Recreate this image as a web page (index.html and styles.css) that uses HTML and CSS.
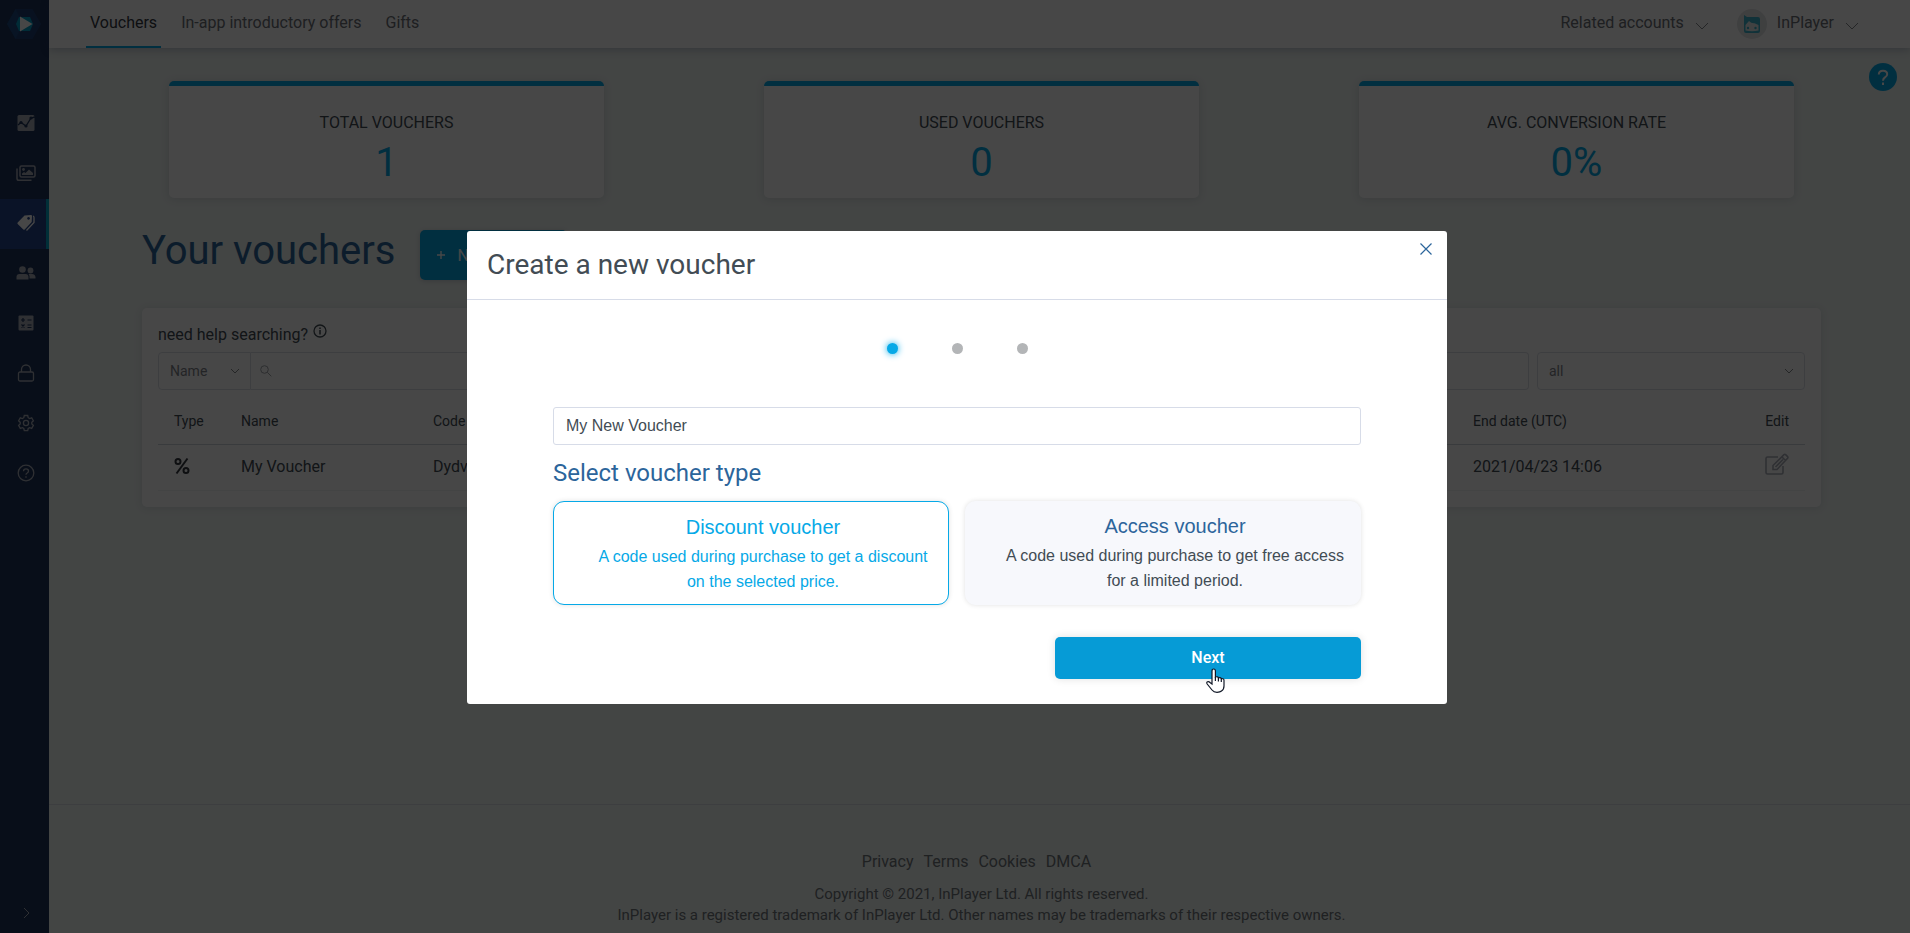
FILE: index.html
```html
<!DOCTYPE html>
<html lang="en">
<head>
    <meta charset="UTF-8">
    <meta name="viewport" content="width=device-width, initial-scale=1.0">
    <title>Vouchers - InPlayer</title>
    <link rel="stylesheet" href="styles.css">
</head>
<body>
    <div class="app">
        <aside class="sidebar">
            <a href="#" class="logo" aria-label="InPlayer">
                <svg width="34" height="30" viewBox="0 0 34 30">
                    <path d="M8.500 0h17L34 15l-8.500 15h-17L0 15z" fill="#1f3f74"/>
                    <path d="M8.500 0L0 15l8.500 15L16 15z" fill="#1d4a80"/>
                    <path d="M12 8h11l3 7-3 7H12l-3-7z" fill="#069dc6"/>
                    <path d="M13 7.500L25.500 15 13 22.500z" fill="#fff"/>
                </svg>
            </a>
            <nav class="side-nav">
                <a href="#" class="side-link" aria-label="Analytics">
                    <svg width="18" height="18" viewBox="0 0 18 18">
                        <rect x="0.500" y="1" width="17" height="16" rx="1.500" fill="currentColor"/>
                        <path d="M1 11l3-2.500 5 3.500 5-8 4-1" fill="none" stroke="#1d3259" stroke-width="1.300"/>
                        <circle cx="4" cy="8.500" r="1.600" fill="#1d3259"/>
                        <circle cx="9" cy="12" r="1.600" fill="#1d3259"/>
                        <circle cx="14" cy="4" r="1.600" fill="#1d3259"/>
                    </svg>
                </a>
                <a href="#" class="side-link" aria-label="Assets">
                    <svg width="20" height="18" viewBox="0 0 20 18">
                        <rect x="4" y="2" width="15" height="11" rx="1.500" fill="none" stroke="currentColor" stroke-width="1.500"/>
                        <path d="M1 4.500V14.500q0 1.800 1.800 1.800H15.500" fill="none" stroke="currentColor" stroke-width="1.500"/>
                        <circle cx="7.500" cy="5.500" r="1.400" fill="currentColor"/>
                        <path d="M6 11V9.500l2-1.500 1.500 1 3.500-3.500 4 3.500v2z" fill="currentColor"/>
                    </svg>
                </a>
                <a href="#" class="side-link active" aria-label="Vouchers">
                    <svg width="18" height="18" viewBox="0 0 18 18">
                        <path fill-rule="evenodd" d="M7.500 1.500L14 1q1 0 1 1l-.3 6-7 7.500q-.7.700-1.400 0L.7 10q-.7-.7 0-1.400zM11.500 3a1.400 1.400 0 1 0 .1 0z" fill="currentColor"/>
                        <path d="M16 2q1 .3 1 1.500V8.500L9.500 16.500" fill="none" stroke="currentColor" stroke-width="1.300"/>
                    </svg>
                </a>
                <a href="#" class="side-link" aria-label="Audience">
                    <svg width="20" height="18" viewBox="0 0 20 18">
                        <circle cx="6.500" cy="5.500" r="3.300" fill="currentColor"/>
                        <path d="M.5 15.500v-2.500q0-3 3-3h6q3 0 3 3v2.500z" fill="currentColor"/>
                        <circle cx="14.500" cy="6.500" r="2.900" fill="currentColor"/>
                        <path d="M13.500 14.500v-2q0-1.500-1-2.500H16q3 0 3.500 3v1.500z" fill="currentColor"/>
                    </svg>
                </a>
                <a href="#" class="side-link" aria-label="Accounting">
                    <svg width="18" height="18" viewBox="0 0 18 18">
                        <rect x="1.500" y="1.500" width="15" height="15" rx="1" fill="currentColor"/>
                        <path d="M4 6h4M6 4v4M10.500 6h4M4.500 10.500l3 3M7.500 10.500l-3 3M10.500 11h4M10.500 13.500h4" stroke="#1d3259" stroke-width="1.200"/>
                    </svg>
                </a>
                <a href="#" class="side-link" aria-label="Security">
                    <svg width="18" height="18" viewBox="0 0 18 18" fill="none" stroke="currentColor" stroke-width="1.300">
                        <rect x="1.500" y="8" width="15" height="9" rx="1.500"/>
                        <path d="M4.500 8V5.500a4.500 4.500 0 0 1 9 0V8"/>
                    </svg>
                </a>
                <a href="#" class="side-link" aria-label="Settings">
                    <svg width="18" height="18" viewBox="0 0 18 18" fill="none" stroke="currentColor" stroke-width="1.300">
                        <path d="M7.300 1.500h3.400l.5 2.200 1.400.8 2.100-.7 1.700 3-1.600 1.500v1.600l1.600 1.500-1.700 3-2.100-.7-1.400.8-.5 2.200H7.300l-.5-2.200-1.400-.8-2.100.7-1.700-3 1.600-1.500V8.300L1.600 6.800l1.700-3 2.100.7 1.400-.8z"/>
                        <circle cx="9" cy="9" r="2.600"/>
                    </svg>
                </a>
                <a href="#" class="side-link" aria-label="Help">
                    <svg width="18" height="18" viewBox="0 0 18 18" fill="none" stroke="currentColor" stroke-width="1.300">
                        <circle cx="9" cy="9" r="7.800"/>
                        <path d="M6.500 7.200q0-2.400 2.500-2.400t2.500 2.200q0 1.200-1.300 2-1.200.7-1.200 1.800M9 12.300v1.400"/>
                    </svg>
                </a>
            </nav>
            <button type="button" class="side-toggle" aria-label="Expand menu">
                <svg width="8" height="12" viewBox="0 0 8 12"><path d="M1 1l5 5-5 5" fill="none" stroke="currentColor"/></svg>
            </button>
        </aside>

        <div class="page">
            <header class="topbar">
                <nav class="tabs">
                    <a href="#" class="tab active">Vouchers</a>
                    <a href="#" class="tab">In-app introductory offers</a>
                    <a href="#" class="tab">Gifts</a>
                </nav>
                <div class="account">
                    <button type="button" class="account-menu">
                        Related accounts
                        <svg class="caret" width="14" height="8" viewBox="0 0 14 8"><path d="M1 1l6 6 6-6" fill="none" stroke="currentColor"/></svg>
                    </button>
                    <button type="button" class="account-menu">
                        <span class="avatar">
                            <svg width="18" height="20" viewBox="0 0 18 20">
                                <path d="M1 1l3 2h11q2 0 2 2v12q0 2-2 2H3q-2 0-2-2z" fill="#3fb4cc"/>
                                <path d="M2.500 16.500V11l3.500-4q2 2.500 5.500 2.300L15.500 11v5.500q-6.500 1.500-13 0z" fill="#e8eeee"/>
                                <circle cx="5" cy="14" r="1.200" fill="#3fb4cc"/>
                                <circle cx="12.500" cy="14" r="1.200" fill="#3fb4cc"/>
                            </svg>
                        </span>
                        InPlayer
                        <svg class="caret" width="14" height="8" viewBox="0 0 14 8"><path d="M1 1l6 6 6-6" fill="none" stroke="currentColor"/></svg>
                    </button>
                </div>
            </header>

            <button type="button" class="help-btn" aria-label="Help">
                <svg width="28" height="28" viewBox="0 0 28 28">
                    <path d="M9.800 11.500q0-3.800 4.200-3.800t4.200 3.500q0 1.800-2.200 3.200-2 1.300-2 3.400M14 19.500v2.500" fill="none" stroke="#fff" stroke-width="2"/>
                </svg>
            </button>

            <main class="content">
                <section class="stats">
                    <div class="stat">
                        <h2>TOTAL VOUCHERS</h2>
                        <p>1</p>
                    </div>
                    <div class="stat">
                        <h2>USED VOUCHERS</h2>
                        <p>0</p>
                    </div>
                    <div class="stat">
                        <h2>AVG. CONVERSION RATE</h2>
                        <p>0%</p>
                    </div>
                </section>

                <section class="vouchers">
                    <div class="title-row">
                        <h1>Your vouchers</h1>
                        <button type="button" class="btn-new">
                            <svg width="8" height="8" viewBox="0 0 8 8"><path d="M4 0v8M0 4h8" stroke="currentColor" stroke-width="1.400"/></svg>
                            New voucher
                        </button>
                    </div>

                    <div class="panel">
                        <div class="search-help">
                            need help searching?
                            <svg width="14" height="14" viewBox="0 0 14 14" fill="none" stroke="currentColor">
                                <circle cx="7" cy="7" r="6" stroke-width="1.300"/>
                                <path d="M7 6v4.500M7 3.500v1.500" stroke-width="1.500"/>
                            </svg>
                        </div>
                        <div class="filters">
                            <div class="search-group">
                                <select class="select select-name" aria-label="Search by">
                                    <option>Name</option>
                                </select>
                                <div class="search-box">
                                    <svg width="12" height="12" viewBox="0 0 12 12" fill="none" stroke="currentColor"><circle cx="4.500" cy="4.500" r="3.800"/><path d="M7.300 7.300l4 4"/></svg>
                                    <input type="text" aria-label="Search vouchers">
                                </div>
                            </div>
                            <select class="select select-all" aria-label="Voucher type">
                                <option>all</option>
                            </select>
                        </div>

                        <table class="voucher-table">
                            <thead>
                                <tr>
                                    <th class="col-type">Type</th>
                                    <th class="col-name">Name</th>
                                    <th class="col-code">Code</th>
                                    <th class="col-date">End date (UTC)</th>
                                    <th class="col-edit">Edit</th>
                                </tr>
                            </thead>
                            <tbody>
                                <tr>
                                    <td>
                                        <svg class="percent" width="16" height="18" viewBox="0 0 16 18" fill="none" stroke="currentColor" stroke-width="2">
                                            <circle cx="4" cy="4.500" r="2.500"/>
                                            <circle cx="12" cy="13.500" r="2.500"/>
                                            <path d="M13.500 1.500l-11 15"/>
                                        </svg>
                                    </td>
                                    <td>My Voucher</td>
                                    <td>Dydv</td>
                                    <td>2021/04/23 14:06</td>
                                    <td class="col-edit">
                                        <button type="button" class="edit-btn" aria-label="Edit voucher">
                                            <svg width="24" height="22" viewBox="0 0 24 22" fill="none" stroke="currentColor" stroke-width="1.600">
                                                <path d="M13 4H2.500Q1 4 1 5.500v14Q1 21 2.500 21h14q1.500 0 1.500-1.500V13"/>
                                                <path d="M8 16.500v-4L19 1.600q.8-.7 1.600 0l2 2q.7.800 0 1.600L12 16.500zM17 4l3.500 3.500M10.500 14l7.500-7.500"/>
                                            </svg>
                                        </button>
                                    </td>
                                </tr>
                            </tbody>
                        </table>
                    </div>
                </section>
            </main>

            <footer class="footer">
                <nav class="footer-links">
                    <a href="#">Privacy</a>
                    <a href="#">Terms</a>
                    <a href="#">Cookies</a>
                    <a href="#">DMCA</a>
                </nav>
                <p>Copyright © 2021, InPlayer Ltd. All rights reserved.</p>
                <p>InPlayer is a registered trademark of InPlayer Ltd. Other names may be trademarks of their respective owners.</p>
            </footer>
        </div>
    </div>

    <div class="overlay">
        <form class="modal" role="dialog" aria-labelledby="modalTitle">
            <div class="modal-header">
                <h2 id="modalTitle">Create a new voucher</h2>
                <button type="button" class="close-btn" aria-label="Close">
                    <svg width="12" height="12" viewBox="0 0 12 12"><path d="M0.500 0.500l11 11M11.500 0.500l-11 11" stroke="currentColor" stroke-width="1.200"/></svg>
                </button>
            </div>
            <div class="modal-body">
                <div class="steps">
                    <span class="step active"></span>
                    <span class="step"></span>
                    <span class="step"></span>
                </div>

                <input type="text" class="name-input" aria-label="Voucher name" value="My New Voucher">

                <h3>Select voucher type</h3>
                <div class="types">
                    <label class="type selected">
                        <input type="radio" name="type" value="discount" checked>
                        <span class="type-title">Discount voucher</span>
                        <span class="type-text">A code used during purchase to get a discount on the selected price.</span>
                    </label>
                    <label class="type">
                        <input type="radio" name="type" value="access">
                        <span class="type-title">Access voucher</span>
                        <span class="type-text">A code used during purchase to get free access for a limited period.</span>
                    </label>
                </div>

                <div class="modal-actions">
                    <button type="button" class="btn-next">
                        Next
                        <svg class="pointer" width="20" height="26" viewBox="0 0 20 26">
                            <path d="M6 16V3q0-2 1.700-2T9.400 3v6q2.600-.8 3 .8 2.400-.6 2.900.8 2.700-.4 2.700 1.900V18q0 3.500-2.500 5-1.300 1.300-4.500 1.300T6 22L1.200 16q-1-1.700.3-2.300T4 14.500z" fill="#fff" stroke="#111827" stroke-width="1.200"/>
                            <path d="M9.400 9v4M12.400 10v3.500M15.300 10.500V14" stroke="#111827" stroke-width="1.200"/>
                        </svg>
                    </button>
                </div>
            </div>
        </form>
    </div>
</body>
</html>
```
FILE: styles.css
```css
* {
    margin: 0;
    padding: 0;
    box-sizing: border-box;
}

body {
    font-family: Roboto, sans-serif;
    font-size: 16px;
    color: #424c54;
    background: #f0f6f3;
}

a {
    color: inherit;
    text-decoration: none;
}

button {
    font-family: inherit;
    font-size: 16px;
    color: inherit;
    background: none;
    border: none;
    cursor: pointer;
}

svg {
    display: block;
    flex-shrink: 0;
}

h1, h2, h3, th {
    font-weight: 400;
}

.app {
    display: flex;
    min-height: 100vh;
}

/* sidebar */
.sidebar {
    display: flex;
    flex-direction: column;
    width: 49px;
    flex-shrink: 0;
    background: #1d3259;
    color: #a9adb8;
}

.logo {
    padding: 9px 7px 60px;
}

.side-link {
    display: flex;
    align-items: center;
    justify-content: center;
    height: 50px;
    padding: 0 0 3px 2px;
}

.side-link.active {
    background: #24448b;
    border-right: 3px solid #06a9c8;
    color: #fff;
    padding-left: 5px;
}

.side-toggle {
    display: flex;
    justify-content: center;
    margin-top: auto;
    padding: 14px 0 14px 5px;
}

/* top bar */
.page {
    display: flex;
    flex-direction: column;
    flex: 1;
    position: relative;
}

.topbar {
    display: flex;
    justify-content: space-between;
    height: 48px;
    padding: 0 51px 0 37px;
    background: #fff;
    box-shadow: 0 2px 8px rgba(30, 40, 90, 0.25);
}

.tabs {
    display: flex;
    gap: 16px;
}

.tab {
    padding: 0 4px;
    line-height: 45px;
    color: #6c7077;
}

.tab.active {
    color: #33383f;
    border-bottom: 2px solid #06a9e7;
}

.account {
    display: flex;
    gap: 28px;
    color: #6c7077;
}

.account-menu {
    display: flex;
    align-items: center;
    padding-bottom: 3px;
}

.caret {
    margin: 6px 0 0 11px;
    color: #85888e;
}

.avatar {
    display: flex;
    align-items: center;
    justify-content: center;
    width: 30px;
    height: 30px;
    margin: 3px 10px 0 0;
    border-radius: 50%;
    background: #e2e4e6;
}

.help-btn {
    position: absolute;
    top: 63px;
    right: 13px;
    width: 28px;
    height: 28px;
    border-radius: 50%;
    background: #06a9e7;
}

/* stats */
.content {
    padding: 33px 36px 0 40px;
}

.stats {
    display: flex;
    justify-content: space-around;
}

.stat {
    width: 435px;
    height: 117px;
    padding-top: 25px;
    border-top: 5px solid #06a9e7;
    border-radius: 5px;
    background: #fff;
    box-shadow: 0 1px 8px rgba(40, 40, 90, 0.15);
    text-align: center;
}

.stat h2 {
    font-size: 16px;
    line-height: 24px;
}

.stat p {
    font-size: 40px;
    line-height: 56px;
    color: #06a9e7;
}

/* vouchers */
.vouchers {
    padding: 32px 53px 0;
}

.title-row {
    display: flex;
    gap: 25px;
    margin-bottom: 28px;
}

.title-row h1 {
    font-size: 40px;
    line-height: 42px;
    color: #2c659b;
}

.btn-new {
    display: flex;
    align-items: center;
    gap: 12px;
    height: 50px;
    padding: 0 17px;
    border-radius: 5px;
    background: #06a9e7;
    box-shadow: 0 1px 5px rgba(40, 40, 90, 0.2);
    color: #fff;
}

.panel {
    padding: 16px;
    border-radius: 5px;
    background: #fff;
    box-shadow: 0 1px 8px rgba(40, 40, 90, 0.12);
}

.search-help {
    display: flex;
    gap: 5px;
    height: 28px;
    line-height: 22px;
}

.filters {
    display: flex;
    gap: 8px;
}

.search-group {
    display: flex;
    flex: 1;
}

.select {
    height: 38px;
    padding: 0 11px;
    border: 1px solid #dcdfe6;
    border-radius: 4px;
    font-family: inherit;
    font-size: 14px;
    color: #7f838a;
    appearance: none;
    background: #fff url("data:image/svg+xml,%3Csvg xmlns='http://www.w3.org/2000/svg' width='10' height='6'%3E%3Cpath d='M1 1l4 4 4-4' fill='none' stroke='%2385888e'/%3E%3C/svg%3E") no-repeat right 10px center;
}

.select-name {
    width: 93px;
    border-radius: 4px 0 0 4px;
}

.select-all {
    width: 268px;
}

.search-box {
    display: flex;
    align-items: center;
    gap: 8px;
    flex: 1;
    padding: 0 9px;
    border: 1px solid #dcdfe6;
    border-left: none;
    border-radius: 0 4px 4px 0;
    color: #a0a4aa;
}

.search-box input {
    flex: 1;
    border: none;
    outline: none;
    font-size: 14px;
}

.voucher-table {
    width: 100%;
    border-collapse: collapse;
    table-layout: fixed;
    text-align: left;
}

.voucher-table th {
    height: 54px;
    padding: 8px 16px 0;
    font-size: 14px;
    border-bottom: 1px solid #cdd2da;
}

.voucher-table td {
    height: 46px;
    padding: 0 16px 2px;
    border-bottom: 1px solid #f1f2f5;
}

.col-type {
    width: 67px;
}

.col-name {
    width: 192px;
}

.col-date {
    width: 248px;
}

.col-edit {
    width: 100px;
    text-align: right;
}

.percent {
    color: #33383f;
}

.edit-btn {
    color: #a9adb8;
}

/* footer */
.footer {
    margin-top: auto;
    padding: 46px 0 7px 4px;
    border-top: 1px solid #dcdfe6;
    color: #70767c;
    font-size: 15px;
    line-height: 21px;
    text-align: center;
}

.footer-links {
    display: flex;
    justify-content: center;
    gap: 10px;
    margin-bottom: 12px;
    padding-right: 10px;
    font-size: 16px;
}

/* modal */
.overlay {
    position: fixed;
    inset: 0;
    display: flex;
    align-items: center;
    justify-content: center;
    padding: 2px 0 0 4px;
    background: rgba(0, 0, 0, 0.72);
}

.modal {
    width: 980px;
    max-width: 100%;
    border-radius: 3px;
    background: #fff;
}

.modal-header {
    display: flex;
    justify-content: space-between;
    align-items: flex-start;
    height: 69px;
    padding: 12px 15px 0 20px;
    border-bottom: 1px solid #d7dce8;
}

.modal-header h2 {
    font-size: 28px;
    line-height: 44px;
}

.close-btn {
    color: #2c659b;
}

.modal-body {
    padding: 43px 86px 25px;
}

.steps {
    display: flex;
    justify-content: center;
    gap: 54px;
    margin-bottom: 53px;
}

.step {
    width: 11px;
    height: 11px;
    border-radius: 50%;
    background: #b3b5b7;
}

.step.active {
    background: #06a9e7;
    box-shadow: 0 0 7px #06a9e7;
}

.name-input {
    display: block;
    width: 100%;
    height: 38px;
    padding: 0 12px;
    border: 1px solid #d7dce8;
    border-radius: 3px;
    font-family: "Liberation Sans", Arial, sans-serif;
    font-size: 16px;
    color: #424c54;
    outline: none;
}

.modal-body h3 {
    margin: 12px 0;
    font-size: 24px;
    line-height: 32px;
    color: #2c659b;
}

.types {
    display: grid;
    grid-template-columns: 1fr 1fr;
    gap: 16px;
    font-family: "Liberation Sans", Arial, sans-serif;
}

.type {
    position: relative;
    padding: 10px 16px 10px 40px;
    border-radius: 11px;
    background: #f7f8fc;
    box-shadow: 0 0 5px rgba(0, 0, 0, 0.12);
    text-align: center;
    cursor: pointer;
}

.type input {
    position: absolute;
    opacity: 0;
}

.type span {
    display: block;
}

.type-title {
    margin-bottom: 2px;
    font-size: 20px;
    line-height: 30px;
    color: #2c659b;
}

.type-text {
    line-height: 25px;
}

.type.selected {
    border: 1px solid #06a9e7;
    background: #fff;
}

.type.selected span {
    color: #06a9e7;
}

.modal-actions {
    display: flex;
    justify-content: flex-end;
    margin-top: 32px;
}

.btn-next {
    position: relative;
    width: 306px;
    height: 42px;
    padding-bottom: 2px;
    border-radius: 5px;
    background: #069bd6;
    box-shadow: 0 0 8px rgba(0, 0, 0, 0.12);
    color: #fff;
    font-weight: 500;
}

/* hand cursor resting on the button */
.pointer {
    position: absolute;
    left: 151px;
    top: 31px;
}
```
